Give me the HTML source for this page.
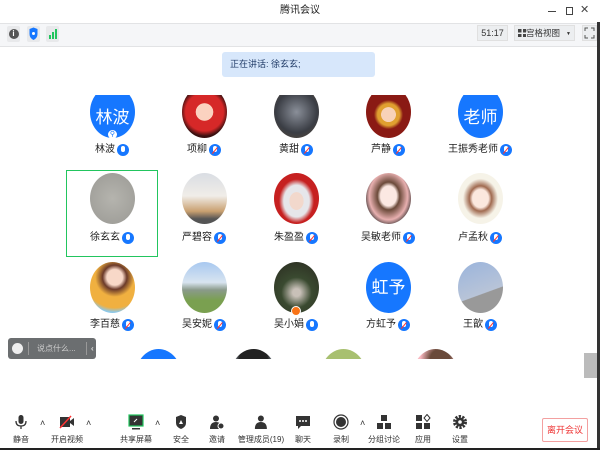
<!DOCTYPE html>
<html><head><meta charset="utf-8"><style>
*{margin:0;padding:0;box-sizing:border-box}
body{width:600px;height:450px;overflow:hidden;background:#fff;font-family:"Liberation Sans","Noto Sans CJK SC",sans-serif;position:relative;color:#222}
.a{position:absolute}
.av{position:absolute;width:45px;height:51px;border-radius:50%;overflow:hidden}
.nm{position:absolute;font-size:10px;color:#222;white-space:nowrap;height:14px;line-height:14px;display:flex;align-items:center;gap:2px;transform:translateX(-50%)}
.mic{width:12px;height:12px;border-radius:50%;background:#1677ff;display:inline-block;position:relative}
.mic:before{content:"";position:absolute;left:4px;top:2px;width:4px;height:6px;border-radius:2px;background:#fff}
.mic.off:after{content:"";position:absolute;left:2px;top:5.5px;width:8px;height:1.3px;background:#f33;transform:rotate(-50deg)}
.tb{position:absolute;top:414px;text-align:center;font-size:8px;color:#333;transform:translateX(-50%);white-space:nowrap}
.tb svg{display:block;margin:0 auto 4px;}
.car{position:absolute;top:418px;font-size:9px;color:#333}
#grid{position:absolute;left:0;top:0;width:600px;height:450px;clip-path:inset(95px 0 91px 0)}
</style></head><body>
<!-- title -->
<div class="a" style="left:0;top:0;width:600px;height:22px;text-align:center;font-size:10px;line-height:22px;color:#222">腾讯会议</div>
<div class="a" style="left:548px;top:11px;width:8px;height:1px;background:#444"></div>
<div class="a" style="left:566px;top:7px;width:7px;height:8px;border:1px solid #444"></div>
<div class="a" style="left:580px;top:3px;font-size:11px;color:#444">✕</div>
<!-- toolbar -->
<div class="a" style="left:0;top:23px;width:600px;height:24px;background:#f5f6f8;border-top:1px solid #e2e3e5;border-bottom:1px solid #e2e3e5"></div>
<div class="a" style="left:7px;top:26px;width:13px;height:16px;background:#e8e9eb;border-radius:2px"><div style="margin:3px 1.5px;width:10px;height:10px;border-radius:50%;background:#555;color:#fff;font-size:8px;line-height:10px;text-align:center;font-weight:bold">i</div></div>
<div class="a" style="left:27px;top:26px;width:13px;height:16px;background:#e8e9eb;border-radius:2px"><svg width="13" height="16"><path d="M2.5 3 L6.5 1.5 L10.5 3 L10.5 8 Q10.5 12 6.5 14 Q2.5 12 2.5 8Z" fill="#1677ff"/><circle cx="6.5" cy="7.5" r="1.5" fill="#fff"/></svg></div>
<div class="a" style="left:46px;top:26px;width:13px;height:16px;background:#e8e9eb;border-radius:2px"><svg width="13" height="16"><rect x="3" y="9" width="2" height="4" fill="#22c55e"/><rect x="6" y="6" width="2" height="7" fill="#22c55e"/><rect x="9" y="3" width="2" height="10" fill="#22c55e"/></svg></div>
<div class="a" style="left:477px;top:25px;width:31px;height:16px;background:#eceef0;border:1px solid #e0e0e0;font-size:9px;line-height:14px;text-align:center;color:#333">51:17</div>
<div class="a" style="left:514px;top:25px;width:61px;height:16px;background:#eceef0;border:1px solid #e0e0e0;font-size:8.5px;line-height:14px;color:#333;padding-left:3px;white-space:nowrap"><span style="display:inline-block;width:8px;height:8px;background:linear-gradient(#444,#444) 0 0/3.5px 3.5px no-repeat,linear-gradient(#444,#444) 4.5px 0/3.5px 3.5px no-repeat,linear-gradient(#444,#444) 0 4.5px/3.5px 3.5px no-repeat,linear-gradient(#444,#444) 4.5px 4.5px/3.5px 3.5px no-repeat;vertical-align:-1px"></span>宫格视图<span style="font-size:5px;margin-left:6px;vertical-align:1px">▼</span></div>
<div class="a" style="left:582px;top:25px;width:15px;height:16px;background:#eceef0;border:1px solid #e0e0e0"><svg width="13" height="14"><path d="M2 5V2H5M8 2H11V5M11 9V12H8M5 12H2V9" stroke="#555" fill="none"/></svg></div>
<div class="a" style="left:597px;top:22px;width:3px;height:428px;background:#333"></div>
<!-- speaking -->
<div class="a" style="left:222px;top:52px;width:153px;height:25px;background:#d7e7fb;border-radius:3px;font-size:9px;line-height:25px;padding-left:8px;color:#1f3a66">正在讲话: 徐玄玄;</div>
<div id="grid">
<!-- row1 -->
<div class="av" style="left:90px;top:86px;height:52px;background:#1677ff;color:#fff;font-size:17px;text-align:center;line-height:52px;padding-top:6px">林波</div>
<div class="a" style="left:108px;top:130px;width:9px;height:9px;border-radius:50%;background:#fff;color:#1677ff;font-size:7px;text-align:center;line-height:9px">⚲</div>
<div class="av" style="left:182px;top:86px;height:52px;background:radial-gradient(circle at 50% 50%,#fbd2c0 0 25%,#d62828 26% 55%,#3a1010 70%)"></div>
<div class="av" style="left:274px;top:86px;height:52px;background:radial-gradient(circle at 50% 50%,#8a8f99,#3a3d44 60%,#5a4a38)"></div>
<div class="av" style="left:366px;top:86px;height:52px;background:radial-gradient(circle at 50% 55%,#f8d2b8 0 20%,#e0a030 21% 30%,#8a1a14 40%)"></div>
<div class="av" style="left:458px;top:86px;height:52px;background:#1677ff;color:#fff;font-size:17px;text-align:center;line-height:52px;padding-top:6px">老师</div>
<div class="nm" style="left:112px;top:143px">林波<i class="mic"></i></div>
<div class="nm" style="left:204px;top:143px">项柳<i class="mic off"></i></div>
<div class="nm" style="left:296px;top:143px">黄甜<i class="mic off"></i></div>
<div class="nm" style="left:388px;top:143px">芦静<i class="mic off"></i></div>
<div class="nm" style="left:480px;top:143px">王振秀老师<i class="mic off"></i></div>
<!-- row2 -->
<div class="a" style="left:66px;top:170px;width:92px;height:87px;border:1.5px solid #22c55e"></div>
<div class="av" style="left:90px;top:173px;background:radial-gradient(circle,#b5b4ae,#9a9994)"></div>
<div class="av" style="left:182px;top:173px;background:linear-gradient(#d9dde3,#f0ede8 45%,#c9a070 75%,#555 90%)"></div>
<div class="av" style="left:274px;top:173px;background:radial-gradient(ellipse at 50% 55%,#f2d8cc 0 22%,#e6e6ea 23% 40%,#c62020 55%)"></div>
<div class="av" style="left:366px;top:173px;background:radial-gradient(ellipse at 50% 45%,#fbe8e2 0 25%,#6b4a3a 35%,#e8b0b0 60%,#222 80%)"></div>
<div class="av" style="left:458px;top:173px;background:radial-gradient(ellipse at 50% 50%,#fbe8de 0 25%,#a06a50 35%,#f6f3e8 55%)"></div>
<div class="nm" style="left:112px;top:231px">徐玄玄<i class="mic"></i></div>
<div class="nm" style="left:204px;top:231px">严碧容<i class="mic off"></i></div>
<div class="nm" style="left:296px;top:231px">朱盈盈<i class="mic off"></i></div>
<div class="nm" style="left:388px;top:231px">吴敏老师<i class="mic off"></i></div>
<div class="nm" style="left:480px;top:231px">卢孟秋<i class="mic off"></i></div>
<!-- row3 -->
<div class="av" style="left:90px;top:262px;background:radial-gradient(circle at 55% 30%,#f8d8c8 0 18%,#6b3a2a 28%,#f0b040 45%,#f0b040 70%,#8ec8e8 80%)"></div>
<div class="av" style="left:182px;top:262px;background:linear-gradient(#a8c8f0,#d8e4f0 40%,#8a9a8a 55%,#7aa050 75%)"></div>
<div class="av" style="left:274px;top:262px;background:radial-gradient(circle at 50% 60%,#c8c0b8 0 10%,#3a4a30 40%,#2a2a20)"></div>
<div class="a" style="left:291px;top:306px;width:10px;height:10px;border-radius:50%;background:#f97316;border:1px solid #fff"></div>
<div class="av" style="left:366px;top:262px;background:#1677ff;color:#fff;font-size:17px;text-align:center;line-height:51px">虹予</div>
<div class="av" style="left:458px;top:262px;background:linear-gradient(160deg,#9ab4dc,#b8c4d8 60%,#999 61%)"></div>
<div class="nm" style="left:112px;top:318px">李百慈<i class="mic off"></i></div>
<div class="nm" style="left:204px;top:318px">吴安妮<i class="mic off"></i></div>
<div class="nm" style="left:296px;top:318px">吴小娟<i class="mic"></i></div>
<div class="nm" style="left:388px;top:318px">方虹予<i class="mic off"></i></div>
<div class="nm" style="left:480px;top:318px">王歆<i class="mic off"></i></div>
<!-- row4 -->
<div class="av" style="left:136px;top:349px;background:#1677ff"></div>
<div class="av" style="left:231px;top:349px;background:radial-gradient(circle at 50% 20%,#222 30%,#c8d8e8 50%)"></div>
<div class="av" style="left:321px;top:349px;background:#a8c070"></div>
<div class="av" style="left:413px;top:349px;background:radial-gradient(circle at 60% 20%,#6a4a3a 20%,#f8b8c0 40%)"></div>
</div>
<!-- chat -->
<div class="a" style="left:8px;top:338px;width:88px;height:21px;background:#6b6e70;border-radius:3px;color:#ccc;font-size:8px;line-height:21px;white-space:nowrap">
<span class="a" style="left:4px;top:5px;width:11px;height:11px;border-radius:50%;background:#eee"></span>
<span class="a" style="left:20px;top:4px;width:1px;height:13px;background:#999"></span>
<span class="a" style="left:29px;top:0">说点什么...</span>
<span class="a" style="left:78px;top:4px;width:1px;height:13px;background:#999"></span>
<span class="a" style="left:83px;top:0;color:#fff">‹</span>
</div>
<div class="a" style="left:584px;top:353px;width:13px;height:25px;background:#bbb"></div>
<!-- bottom toolbar -->
<div class="tb" style="left:21px"><svg width="14" height="16"><rect x="4.5" y="1" width="5" height="9" rx="2.5" fill="#333"/><path d="M2 7Q2 12 7 12Q12 12 12 7M7 12V15" stroke="#333" fill="none" stroke-width="1.3"/></svg>静音</div>
<div class="car" style="left:40px">˄</div>
<div class="tb" style="left:67px"><svg width="16" height="16"><rect x="1" y="3" width="10" height="10" fill="#333"/><path d="M11 7L15 4V12L11 9Z" fill="#333"/><path d="M1 14L12 2" stroke="#f33" stroke-width="1.5"/></svg>开启视频</div>
<div class="car" style="left:86px">˄</div>
<div class="tb" style="left:136px"><svg width="16" height="16"><rect x="1" y="1" width="14" height="11" fill="#333" stroke="#22c55e" stroke-width="1.2"/><rect x="4" y="14" width="8" height="1.5" fill="#333"/><path d="M6 8L9 5" stroke="#fff"/></svg>共享屏幕</div>
<div class="car" style="left:155px">˄</div>
<div class="tb" style="left:181px"><svg width="14" height="16"><path d="M2 3L7 1L12 3V9Q12 13 7 15Q2 13 2 9Z" fill="#333"/><path d="M5 10L7 6L9 10Z" fill="#fff"/></svg>安全</div>
<div class="tb" style="left:217px"><svg width="16" height="16"><circle cx="7" cy="4.5" r="3" fill="#333"/><path d="M1 15Q1 8 7 8Q11 8 12 11L10 15Z" fill="#333"/><circle cx="12" cy="12" r="3" fill="#333" stroke="#fff"/></svg>邀请</div>
<div class="tb" style="left:261px"><svg width="16" height="16"><circle cx="8" cy="4.5" r="3" fill="#333"/><path d="M2 15Q2 8 8 8Q14 8 14 15Z" fill="#333"/></svg>管理成员(19)</div>
<div class="tb" style="left:303px"><svg width="16" height="16"><path d="M1 2H15V12H6L3 15V12H1Z" fill="#333"/><circle cx="5" cy="7" r="1" fill="#fff"/><circle cx="8" cy="7" r="1" fill="#fff"/><circle cx="11" cy="7" r="1" fill="#fff"/></svg>聊天</div>
<div class="tb" style="left:341px"><svg width="16" height="16"><circle cx="8" cy="8" r="7" fill="none" stroke="#333" stroke-width="1.2"/><circle cx="8" cy="8" r="5" fill="#333"/></svg>录制</div>
<div class="car" style="left:360px">˄</div>
<div class="tb" style="left:384px"><svg width="16" height="16"><rect x="5" y="1" width="6" height="6" fill="#333"/><rect x="1" y="9" width="6" height="6" fill="#333"/><rect x="9" y="9" width="6" height="6" fill="#333"/></svg>分组讨论</div>
<div class="tb" style="left:423px"><svg width="16" height="16"><rect x="1" y="1" width="6" height="6" fill="#333"/><rect x="1" y="9" width="6" height="6" fill="#333"/><rect x="9" y="9" width="6" height="6" fill="#333"/><path d="M12 0.5L15 4L12 7.5L9 4Z" fill="none" stroke="#333"/></svg>应用</div>
<div class="tb" style="left:460px"><svg width="16" height="16"><circle cx="8" cy="8" r="5.5" fill="none" stroke="#333" stroke-width="3" stroke-dasharray="2.2 1.3"/><circle cx="8" cy="8" r="4.5" fill="#333"/><circle cx="8" cy="8" r="1.8" fill="#fff"/></svg>设置</div>
<div class="a" style="left:542px;top:418px;width:46px;height:24px;border:1px solid #f3a0a0;border-radius:2px;color:#e33;font-size:9px;text-align:center;line-height:22px">离开会议</div>
<div class="a" style="left:0;top:448px;width:600px;height:2px;background:#222"></div>
</body></html>
